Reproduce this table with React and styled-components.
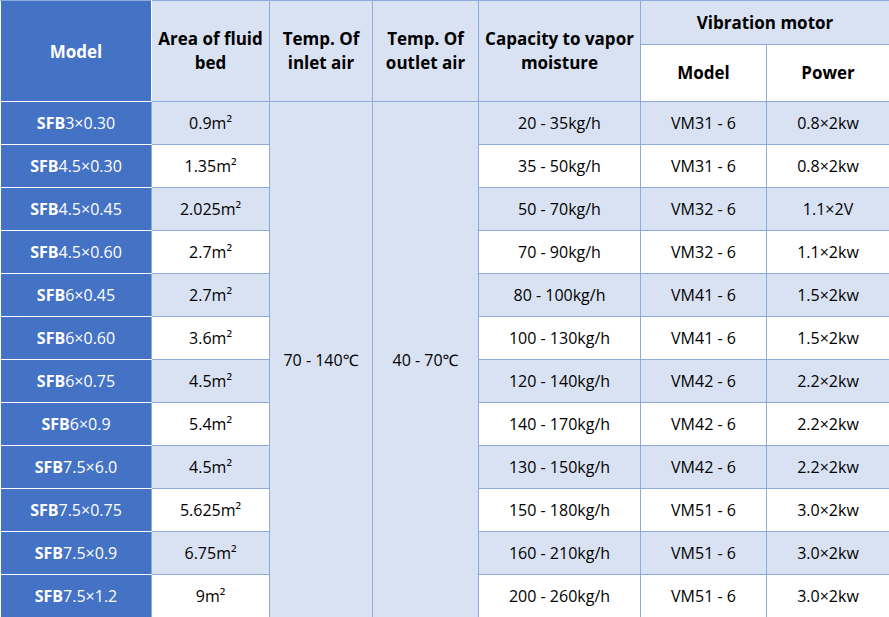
import React from "react";
import styled, { createGlobalStyle } from "styled-components";

const Global = createGlobalStyle`
  html, body { margin: 0; padding: 0; background: #fff; }
  body { font-family: "Open Sans", "Noto Sans", Arial, sans-serif; }
`;

const Table = styled.table`
  width: 889px;
  table-layout: fixed;
  border-collapse: collapse;
  font-size: 16px;
  color: #000;
`;

const Th = styled.th`
  background: ${(p) => (p.$white ? "#ffffff" : "#d9e2f3")};
  border: 1px solid #8eaadb;
  font-weight: 700;
  font-size: 17px;
  line-height: 24px;
  text-align: center;
  vertical-align: middle;
  padding: 0 3px;
  height: ${(p) => p.$h || 0}px;
`;

const ModelHead = styled.th`
  background: #4472c4;
  color: #fff;
  border: 1px solid #ffffff;
  border-top-color: #8eaadb;
  font-weight: 700;
  font-size: 17px;
`;

const Row = styled.tr`
  height: 43px;
`;

const ModelCell = styled.td`
  background: #4472c4;
  color: #fff;
  border: 1px solid #ffffff;
  border-right-color: #8eaadb;
  text-align: center;
  vertical-align: middle;
  padding: 0;
  b { font-weight: 700; }
`;

const Td = styled.td`
  background: ${(p) => (p.$light ? "#d9e2f3" : "#ffffff")};
  border: 1px solid #8eaadb;
  text-align: center;
  vertical-align: middle;
  padding: 0;
`;

const rows = [
  ["3×0.30", "0.9m²", "20 - 35kg/h", "VM31 - 6", "0.8×2kw"],
  ["4.5×0.30", "1.35m²", "35 - 50kg/h", "VM31 - 6", "0.8×2kw"],
  ["4.5×0.45", "2.025m²", "50 - 70kg/h", "VM32 - 6", "1.1×2V"],
  ["4.5×0.60", "2.7m²", "70 - 90kg/h", "VM32 - 6", "1.1×2kw"],
  ["6×0.45", "2.7m²", "80 - 100kg/h", "VM41 - 6", "1.5×2kw"],
  ["6×0.60", "3.6m²", "100 - 130kg/h", "VM41 - 6", "1.5×2kw"],
  ["6×0.75", "4.5m²", "120 - 140kg/h", "VM42 - 6", "2.2×2kw"],
  ["6×0.9", "5.4m²", "140 - 170kg/h", "VM42 - 6", "2.2×2kw"],
  ["7.5×6.0", "4.5m²", "130 - 150kg/h", "VM42 - 6", "2.2×2kw"],
  ["7.5×0.75", "5.625m²", "150 - 180kg/h", "VM51 - 6", "3.0×2kw"],
  ["7.5×0.9", "6.75m²", "160 - 210kg/h", "VM51 - 6", "3.0×2kw"],
  ["7.5×1.2", "9m²", "200 - 260kg/h", "VM51 - 6", "3.0×2kw"],
];

const widths = [151, 118, 103, 106, 162, 126, 123];

export default function App() {
  return (
    <>
      <Global />
      <Table>
        <colgroup>
          {widths.map((w, i) => (
            <col key={i} style={{ width: w }} />
          ))}
        </colgroup>
        <thead>
          <tr>
            <ModelHead rowSpan={2}>Model</ModelHead>
            <Th rowSpan={2}>Area of fluid bed</Th>
            <Th rowSpan={2}>Temp. Of inlet air</Th>
            <Th rowSpan={2}>Temp. Of outlet air</Th>
            <Th rowSpan={2}>Capacity to vapor moisture</Th>
            <Th colSpan={2} $h={43}>Vibration motor</Th>
          </tr>
          <tr>
            <Th $white $h={56}>Model</Th>
            <Th $white $h={56}>Power</Th>
          </tr>
        </thead>
        <tbody>
          {rows.map((r, i) => {
            const light = i % 2 === 0;
            return (
              <Row key={i}>
                <ModelCell>
                  <b>SFB</b>
                  {r[0]}
                </ModelCell>
                <Td $light={light}>{r[1]}</Td>
                {i === 0 && (
                  <>
                    <Td $light rowSpan={12}>70 - 140℃</Td>
                    <Td $light rowSpan={12}>40 - 70℃</Td>
                  </>
                )}
                <Td $light={light}>{r[2]}</Td>
                <Td $light={light}>{r[3]}</Td>
                <Td $light={light}>{r[4]}</Td>
              </Row>
            );
          })}
        </tbody>
      </Table>
    </>
  );
}
